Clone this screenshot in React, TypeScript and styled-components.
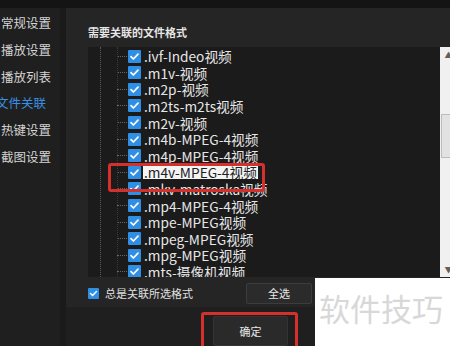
import React from 'react';
import styled, {createGlobalStyle} from 'styled-components';

const FONT = `"Noto Sans CJK SC", "Liberation Sans", sans-serif`;

const GlobalStyle = createGlobalStyle`
  html, body {
    margin: 0;
    padding: 0;
    background: #1e1e1e;
  }
  * {
    box-sizing: border-box;
  }
`;

const menuItems = ['常规设置', '播放设置', '播放列表', '文件关联', '热键设置', '截图设置'];
const ACTIVE_MENU = 3;

const formats = [
  '.ivf-Indeo视频',
  '.m1v-视频',
  '.m2p-视频',
  '.m2ts-m2ts视频',
  '.m2v-视频',
  '.m4b-MPEG-4视频',
  '.m4p-MPEG-4视频',
  '.m4v-MPEG-4视频',
  '.mkv-matroska视频',
  '.mp4-MPEG-4视频',
  '.mpe-MPEG视频',
  '.mpeg-MPEG视频',
  '.mpg-MPEG视频',
  '.mts-摄像机视频',
];
const HIGHLIGHTED = 7;

const checkMark = (size: number) => (
  <svg width={size} height={size} viewBox="0 0 13 13" fill="none">
    <path d="M3 6.6L5.4 9L10 4.2" stroke="#fff" strokeWidth="1.7" strokeLinecap="round" strokeLinejoin="round" />
  </svg>
);

function App() {
  return (
    <Screen>
      <GlobalStyle />
      <TopBar />
      <Body>
        <Sidebar>
          {menuItems.map((item, i) => (
            <MenuItem key={item} $active={i === ACTIVE_MENU}>
              {item}
            </MenuItem>
          ))}
        </Sidebar>
        <Panel>
          <Header>需要关联的文件格式</Header>
          <ListWrap>
            <ListBox>
              {formats.map((f, i) => (
                <Row key={f}>
                  <Connector />
                  <CheckBox $size={13}>{checkMark(13)}</CheckBox>
                  <Label $selected={i === HIGHLIGHTED}>{f}</Label>
                </Row>
              ))}
            </ListBox>
            <Scrollbar>
              <Arrow>▲</Arrow>
              <Thumb />
              <Arrow $bottom>▼</Arrow>
            </Scrollbar>
          </ListWrap>
          <OptionRow>
            <AlwaysLabel>
              <CheckBox $size={11}>{checkMark(11)}</CheckBox>
              总是关联所选格式
            </AlwaysLabel>
            <Button>全选</Button>
            <Button>取消</Button>
          </OptionRow>
          <BottomBar>
            <ConfirmButton>确定</ConfirmButton>
          </BottomBar>
        </Panel>
      </Body>
      <RedMark style={{left: 108, top: 163, width: 157, height: 29}} />
      <RedMark style={{left: 201, top: 312, width: 97, height: 50}} />
      <Watermark>软件技巧</Watermark>
    </Screen>
  );
}

export default App;

const Screen = styled.div`
  position: relative;
  width: 450px;
  height: 346px;
  overflow: hidden;
  background: #1e1e1e;
  font-family: ${FONT};
  color: #e2e2e2;
`;

const TopBar = styled.div`
  height: 8px;
  background: #141414;
`;

const Body = styled.div`
  display: flex;
  height: 338px;
`;

const Sidebar = styled.div`
  width: 66px;
  flex-shrink: 0;
  padding-top: 2px;
  background: #1f1f1f;
  border-right: 6px solid #1a1a1a;
`;

const MenuItem = styled.div<{$active: boolean}>`
  height: 26.8px;
  line-height: 26.8px;
  font-size: 12.5px;
  white-space: nowrap;
  margin-left: ${(p) => (p.$active ? '-4px' : '1px')};
  color: ${(p) => (p.$active ? '#3a8fe3' : '#d4d4d4')};
`;

const Panel = styled.div`
  flex: 1;
  display: flex;
  flex-direction: column;
  background: #252525;
`;

const Header = styled.div`
  height: 42px;
  padding: 10px 0 0 22px;
  display: flex;
  align-items: center;
  font-size: 11px;
  font-weight: 700;
  color: #e6e6e6;
`;

const ListWrap = styled.div`
  display: flex;
  height: 230px;
  margin-left: 22px;
`;

const ListBox = styled.div`
  position: relative;
  width: 352px;
  flex-shrink: 0;
  padding-top: 1px;
  overflow: hidden;
  background: #1b1b1b;

  &::before,
  &::after {
    content: '';
    position: absolute;
    top: 0;
    bottom: 0;
    border-left: 1px dotted #5a5a5a;
  }
  &::before {
    left: 12px;
  }
  &::after {
    left: 29px;
    border-left-color: #3a3a3a;
  }
`;

const Row = styled.div`
  display: flex;
  align-items: center;
  height: 16.6px;
  padding-left: 29px;
`;

const Connector = styled.span`
  width: 10px;
  margin-right: 1px;
  border-top: 1px dotted #666;
`;

const CheckBox = styled.span<{$size: number}>`
  display: inline-flex;
  align-items: center;
  justify-content: center;
  width: ${(p) => p.$size}px;
  height: ${(p) => p.$size}px;
  flex-shrink: 0;
  border-radius: 1px;
  background: #2f8fe4;
`;

const Label = styled.span<{$selected: boolean}>`
  margin-left: 2px;
  padding: 0 1px;
  font-size: 13.7px;
  line-height: 14px;
  white-space: nowrap;
  color: ${(p) => (p.$selected ? '#1e1e1e' : '#e6e6e6')};
  background: ${(p) => (p.$selected ? '#f4f4f4' : 'transparent')};
`;

const Scrollbar = styled.div`
  position: relative;
  width: 17px;
  flex-shrink: 0;
  background: #f0f0f0;
`;

const Arrow = styled.div<{$bottom?: boolean}>`
  position: absolute;
  left: 0;
  right: 0;
  ${(p) => (p.$bottom ? 'bottom: 2px;' : 'top: 2px;')}
  text-align: center;
  font-size: 8px;
  color: #606060;
`;

const Thumb = styled.div`
  position: absolute;
  top: 67px;
  left: 1px;
  width: 15px;
  height: 44px;
  background: #e2e2e2;
  border: 1px solid #bdbdbd;
`;

const OptionRow = styled.div`
  display: grid;
  grid-template-columns: 148px 66px 66px;
  column-gap: 10px;
  align-items: center;
  height: 33px;
  padding: 3px 0 0 22px;
`;

const AlwaysLabel = styled.label`
  display: flex;
  align-items: center;
  gap: 6px;
  font-size: 11px;
  color: #e0e0e0;
`;

const Button = styled.div`
  height: 21px;
  display: flex;
  align-items: center;
  justify-content: center;
  background: #2b2b2b;
  border: 1px solid #3c3c3c;
  border-radius: 2px;
  font-size: 11px;
  color: #e8e8e8;
`;

const BottomBar = styled.div`
  flex: 1;
  padding: 9px 0 0 147px;
  background: #1f1f1f;
`;

const ConfirmButton = styled(Button)`
  width: 75px;
  height: 30px;
  background: #2a2a2a;
  border-color: #333;
`;

const RedMark = styled.div`
  position: absolute;
  border: 3px solid #d5302b;
  border-radius: 3px;
  pointer-events: none;
`;

const Watermark = styled.div`
  position: absolute;
  left: 315px;
  top: 278px;
  width: 135px;
  height: 68px;
  padding: 10px 0 0 4px;
  background: #ffffff;
  font-size: 31px;
  line-height: 40px;
  color: #d8d8d8;
  white-space: nowrap;
`;
